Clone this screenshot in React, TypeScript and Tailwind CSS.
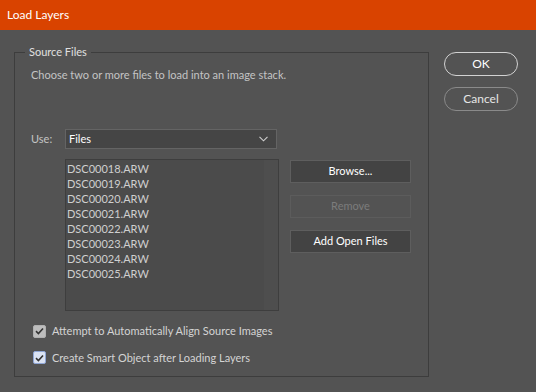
const files = [
  "DSC00018.ARW",
  "DSC00019.ARW",
  "DSC00020.ARW",
  "DSC00021.ARW",
  "DSC00022.ARW",
  "DSC00023.ARW",
  "DSC00024.ARW",
  "DSC00025.ARW",
];

function Check({ blue = false }: { blue?: boolean }) {
  return (
    <span
      className={`flex h-[13px] w-[13px] items-center justify-center rounded-[2px] border ${
        blue ? "border-[#8fa6d6] bg-[#dbe3f3]" : "border-[#b0b0b0] bg-[#bdbdbd]"
      }`}
    >
      <svg width="9" height="8" viewBox="0 0 9 8" fill="none">
        <path d="M1 4.2 L3.4 6.5 L8 1.5" stroke="#333" strokeWidth="1.6" />
      </svg>
    </span>
  );
}

export default function App() {
  return (
    <div className="h-[392px] w-[536px] overflow-hidden bg-[#535353] font-['Lato',sans-serif] text-[11px] text-[#d4d4d4]">
      <div className="flex h-[30px] items-center bg-[#d94300] pl-[7px] text-[12px] text-white">
        Load Layers
      </div>

      <div className="flex">
        <div className="relative ml-[14px] mt-[22px] h-[325px] w-[415px] border border-[#3d3d3d]">
          <span className="absolute left-[10px] top-[-10px] bg-[#535353] px-[4px] leading-[18px] text-[#e0e0e0]">
            Source Files
          </span>

          <p className="ml-[16px] mt-[14px] leading-[16px] text-[#c4c4c4]">
            Choose two or more files to load into an image stack.
          </p>

          <div className="mt-[46px] flex items-center">
            <span className="ml-[16px] w-[34px] text-[#c4c4c4]">Use:</span>
            <div className="flex h-[20px] w-[212px] items-center justify-between border border-[#646464] bg-[#454545] pl-[3px] pr-[8px] text-white">
              Files
              <svg width="9" height="6" viewBox="0 0 9 6" fill="none">
                <path d="M0.5 0.8 L4.5 4.8 L8.5 0.8" stroke="#cfcfcf" strokeWidth="1.1" />
              </svg>
            </div>
          </div>

          <div className="mt-[10px] flex">
            <div className="ml-[50px] flex h-[152px] w-[214px] border border-[#3e3e3e] bg-[#4b4b4b]">
              <ul className="flex-1 pl-[1px] pt-[1px] leading-[15px] text-[#cfcfcf]">
                {files.map((f) => (
                  <li key={f}>{f}</li>
                ))}
              </ul>
              <div className="w-[14px] bg-[#4e4e4e]" />
            </div>

            <div className="ml-[11px] flex flex-col gap-[12px] pt-[1px]">
              <button className="h-[23px] w-[121px] border border-[#5e5e5e] bg-[#434343] text-white">
                Browse...
              </button>
              <button className="h-[23px] w-[121px] border border-[#5c5c5c] bg-[#535353] text-[#7c7c7c]">
                Remove
              </button>
              <button className="h-[23px] w-[121px] border border-[#5e5e5e] bg-[#434343] text-white">
                Add Open Files
              </button>
            </div>
          </div>

          <label className="ml-[18px] mt-[12px] flex items-center gap-[6px]">
            <Check />
            <span>Attempt to Automatically Align Source Images</span>
          </label>
          <label className="ml-[18px] mt-[10px] flex items-center gap-[6px]">
            <Check blue />
            <span>Create Smart Object after Loading Layers</span>
          </label>
        </div>

        <div className="ml-[15px] mt-[22px] flex flex-col gap-[11px]">
          <button className="h-[24px] w-[74px] rounded-full border-[1.5px] border-[#d2d2d2] text-[12px] text-white">
            OK
          </button>
          <button className="h-[24px] w-[74px] rounded-full border border-[#8a8a8a] text-[12px] text-[#e6e6e6]">
            Cancel
          </button>
        </div>
      </div>
    </div>
  );
}
